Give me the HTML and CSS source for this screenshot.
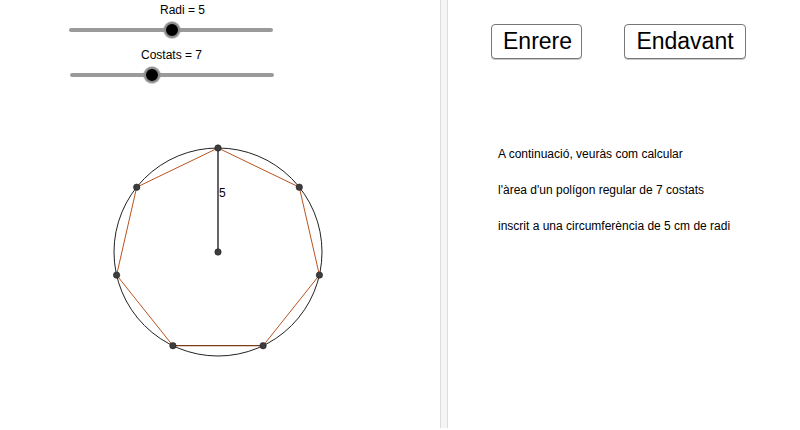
FILE: index.html
```html
<!DOCTYPE html>
<html lang="ca">
<head>
<meta charset="utf-8">
<title>Polígon regular</title>
<link rel="stylesheet" href="styles.css">
</head>
<body>
<div class="app">
  <div class="left">
    <div class="sliders">
      <div class="slider">
        <div class="slider-label label-radi">Radi = 5</div>
        <div class="track-area">
          <div class="track"></div>
          <div class="knob" style="left: 50.5%"></div>
        </div>
      </div>
      <div class="slider slider-second">
        <div class="slider-label label-costats">Costats = 7</div>
        <div class="track-area">
          <div class="track"></div>
          <div class="knob" style="left: 40.2%"></div>
        </div>
      </div>
    </div>
    <svg class="canvas" width="440" height="348" viewBox="0 82 440 348" xmlns="http://www.w3.org/2000/svg">
      <circle cx="218" cy="252" r="104" fill="none" stroke="#222" stroke-width="1"/>
      <polyline points="172.9,345.7 116.6,275.1 136.7,187.2 218,148 299.3,187.2 319.4,275.1 263.1,345.7" fill="none" stroke="#b8531f" stroke-width="1"/>
      <line x1="172.9" y1="345.7" x2="263.1" y2="345.7" stroke="#7a3c1c" stroke-width="1.2"/>
      <line x1="218" y1="252" x2="218" y2="148" stroke="#666" stroke-width="2"/>
      <text x="219" y="197" class="seg-label">5</text>
      <g fill="#3d3d3d" stroke="#222" stroke-width="0.6">
        <circle cx="218" cy="148" r="3.2"/>
        <circle cx="299.3" cy="187.2" r="3.2"/>
        <circle cx="319.4" cy="275.1" r="3.2"/>
        <circle cx="263.1" cy="345.7" r="3.2"/>
        <circle cx="172.9" cy="345.7" r="3.2"/>
        <circle cx="116.6" cy="275.1" r="3.2"/>
        <circle cx="136.7" cy="187.2" r="3.2"/>
        <circle cx="218" cy="252" r="3.2"/>
      </g>
    </svg>
  </div>
  <div class="divider"></div>
  <div class="right">
    <div class="buttons">
      <button class="btn btn-back">Enrere</button>
      <button class="btn btn-next">Endavant</button>
    </div>
    <div class="info">
      <p>A continuació, veuràs com calcular</p>
      <p>l'àrea d'un polígon regular de 7 costats</p>
      <p>inscrit a una circumferència de 5 cm de radi</p>
    </div>
  </div>
</div>
</body>
</html>
```
FILE: styles.css
```css
html, body {
  margin: 0;
  padding: 0;
  background: #fff;
}
body {
  font-family: "Liberation Sans", Arial, sans-serif;
  color: #000;
}
.app {
  display: flex;
  width: 800px;
  height: 430px;
  overflow: hidden;
}
.left {
  width: 440px;
  display: flex;
  flex-direction: column;
}
.sliders {
  padding-top: 3px;
  height: 82px;
  flex: none;
  box-sizing: border-box;
}
.slider {
  margin-left: 69px;
  width: 204px;
}
.slider-second {
  margin-top: 9px;
  margin-left: 70px;
}
.slider-label {
  font-size: 12px;
  line-height: 14px;
  height: 14px;
  white-space: nowrap;
}
.label-radi { padding-left: 91px; }
.label-costats { padding-left: 71px; }
.track-area {
  position: relative;
  height: 18px;
  margin-top: 4px;
  display: flex;
  align-items: center;
}
.track {
  width: 100%;
  height: 4px;
  border-radius: 2px;
  background: #9a9a9a;
}
.knob {
  position: absolute;
  top: 50%;
  width: 12px;
  height: 12px;
  margin: -8.5px 0 0 -8.5px;
  border-radius: 50%;
  background: #000;
  border: 2.5px solid #8c8c8c;
  box-shadow: 0 0 0 1px rgba(150,150,150,0.5);
}
.canvas {
  display: block;
  flex: none;
}
.seg-label {
  font-family: "Liberation Sans", Arial, sans-serif;
  font-size: 12px;
  fill: #000;
}
.divider {
  width: 6px;
  height: 428px;
  background: #f5f5f5;
  border-left: 1px solid #dcdcdc;
  border-right: 1px solid #dcdcdc;
}
.right {
  flex: 1;
  padding-left: 43px;
}
.buttons {
  display: flex;
  gap: 42px;
  padding-top: 24px;
}
.btn {
  font-family: "Liberation Sans", Arial, sans-serif;
  font-size: 23px;
  line-height: 33px;
  height: 35px;
  padding: 0 11px;
  margin: 0;
  background: #fff;
  color: #000;
  border: 1px solid #777;
  border-radius: 4px;
  box-shadow: 0 1px 0 #c8c8c8;
}
.btn-back { width: 91px; }
.btn-next { width: 122px; }
.info {
  margin-top: 77px;
  padding-left: 7px;
}
.info p {
  margin: 0;
  font-size: 12px;
  line-height: 36px;
  white-space: nowrap;
}
```
